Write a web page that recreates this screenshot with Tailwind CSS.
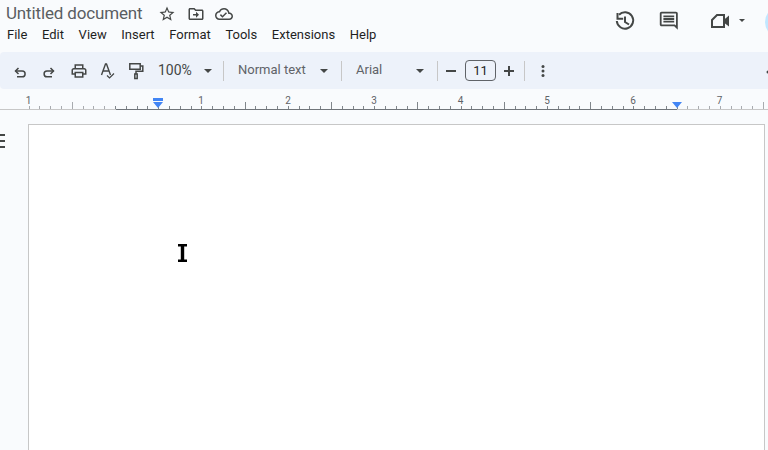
<!DOCTYPE html>
<html lang="en">
<head>
    <title>Untitled document</title>
    <meta name="viewport" content="width=device-width, initial-scale=1.0">
    <script src="https://cdn.jsdelivr.net/npm/@tailwindcss/browser@4"></script>
</head>
<body class="relative h-[450px] w-[768px] overflow-hidden bg-[#f9fbfd] text-[#1f1f1f] font-[Roboto,sans-serif]">
    <!-- Header -->
    <header class="flex h-[52px]">
        <div class="flex-1">
            <div class="flex h-[27px] items-center pl-[6px]">
                <span class="w-[152px] text-[17px] leading-none tracking-[-0.15px] text-[#5a5e62]">Untitled document</span>
                <svg class="h-[18px] w-[18px] fill-[#444746]" viewBox="0 0 24 24"><path d="M22 9.24l-7.19-.62L12 2 9.19 8.63 2 9.24l5.46 4.73L5.82 21 12 17.27 18.18 21l-1.63-7.03L22 9.24zM12 15.4l-3.76 2.27 1-4.28-3.32-2.88 4.38-.38L12 6.1l1.71 4.04 4.38.38-3.32 2.88 1 4.28L12 15.4z"/></svg>
                <svg class="ml-[11px] h-[18px] w-[18px] fill-[#444746]" viewBox="0 0 24 24"><path d="M20 6h-8l-2-2H4c-1.1 0-2 .9-2 2v12c0 1.1.9 2 2 2h16c1.1 0 2-.9 2-2V8c0-1.1-.9-2-2-2zm0 12H4V6h5.17l2 2H20v10zm-8-4H8v-2h4V9l4 4-4 4v-3z"/></svg>
                <svg class="ml-[10px] h-[18px] w-[18px] fill-[#444746]" viewBox="0 0 24 24"><path d="M19.35 10.04C18.67 6.59 15.64 4 12 4 9.11 4 6.6 5.64 5.35 8.04 2.34 8.36 0 10.91 0 14c0 3.31 2.69 6 6 6h13c2.76 0 5-2.24 5-5 0-2.64-2.05-4.78-4.65-4.96zM19 18H6c-2.21 0-4-1.79-4-4 0-2.05 1.53-3.76 3.56-3.97l1.07-.11.5-.95C8.08 7.14 9.94 6 12 6c2.62 0 4.88 1.86 5.39 4.43l.3 1.5 1.53.11c1.56.1 2.78 1.41 2.78 2.96 0 1.65-1.35 3-3 3zm-9-3.82l-2.09-2.09L6.5 13.5 10 17l6.01-6.01-1.41-1.41z"/></svg>
            </div>
            <nav class="flex h-[15px] items-center gap-[14.6px] pl-[7px] text-[13px] leading-none text-[#1f1f1f]">
                <span>File</span>
                <span>Edit</span>
                <span>View</span>
                <span>Insert</span>
                <span>Format</span>
                <span>Tools</span>
                <span>Extensions</span>
                <span>Help</span>
            </nav>
        </div>
        <div class="flex h-[52px] w-[162px] overflow-hidden">
            <svg class="h-[42px] w-[40px] shrink-0 fill-none stroke-[#444746] stroke-[2px]" viewBox="606 0 40 42">
                <path d="M619 14.8A8.2 8.2 0 1 1 616.8 21"/>
                <path d="M617.5 13V18.7H623.2"/>
                <path d="M625 16.5V22L629 24.5"/>
            </svg>
            <svg class="ml-[12px] mt-[10px] h-[21.6px] w-[21.6px] shrink-0 fill-[#444746]" viewBox="0 0 24 24"><path d="M21.99 4c0-1.1-.89-2-1.99-2H4c-1.1 0-2 .9-2 2v12c0 1.1.9 2 2 2h14l4 4-.01-18zM20 4v13.17L18.83 16H4V4h16zM6 12h12v2H6zm0-3h12v2H6zm0-3h12v2H6z"/></svg>
            <svg class="ml-[30px] mt-[10px] h-[22px] w-[22px] shrink-0" viewBox="709 10 22 22">
                <path class="fill-none stroke-[#444746] stroke-[2px]" d="M711 20L716 15H723V27H711Z"/>
                <path class="fill-[#444746]" d="M722 20.5L728 15.5V26.5L722 22Z"/>
            </svg>
            <svg class="ml-[7px] mt-[19px] h-[3px] w-[6px] shrink-0 fill-[#444746]" viewBox="0 0 6 3"><path d="M0 0H6L3 3Z"/></svg>
            <div class="ml-[20px] mt-[6px] h-[32px] w-[32px] shrink-0 rounded-full bg-[#c2e7ff]"></div>
        </div>
    </header>

    <!-- Toolbar -->
    <div class="flex h-[37px] items-center overflow-hidden rounded-l-[4px] bg-[#edf2fa] text-[13px] text-[#444746]">
        <svg class="ml-[11px] h-[18px] w-[18px] shrink-0 fill-none stroke-[#444746] stroke-[1.5px]" viewBox="11 62 18 18">
            <path d="M18.5 68L15.5 71L18.5 74"/>
            <path d="M15.5 71H22.2A2.9 2.9 0 0 1 22.2 76.8H17"/>
        </svg>
        <svg class="ml-[11px] h-[18px] w-[18px] shrink-0 fill-none stroke-[#444746] stroke-[1.5px]" viewBox="40 62 18 18">
            <path d="M50.5 68L53.5 71L50.5 74"/>
            <path d="M53.5 71H47A2.9 2.9 0 0 0 47 76.8H52"/>
        </svg>
        <svg class="ml-[12px] h-[18px] w-[18px] shrink-0 fill-[#444746]" viewBox="0 0 24 24"><path d="M19 8h-1V3H6v5H5c-1.66 0-3 1.34-3 3v6h4v4h12v-4h4v-6c0-1.66-1.34-3-3-3zM8 5h8v3H8V5zm8 14H8v-4h8v4zm2-4v-2H6v2H4v-4c0-.55.45-1 1-1h14c.55 0 1 .45 1 1v4h-2z"/></svg>
        <svg class="ml-[11px] h-[18px] w-[17px] shrink-0 fill-none stroke-[#444746]" viewBox="99 62 17 18">
            <path class="stroke-[1.4px]" d="M101.5 75L105.5 64H106.5L110.5 75M103 71H109"/>
            <path class="stroke-[1.2px]" d="M107 75.5L109.5 78L114 73.5"/>
        </svg>
        <svg class="ml-[11px] h-[18px] w-[18px] shrink-0 fill-none stroke-[#444746] stroke-[1.5px]" viewBox="127 63 18 18">
            <path d="M129.8 64.8H140.2V70.2H129.8Z"/>
            <path d="M140.2 67H142.8V72.2H136V75"/>
            <path d="M134.8 75H137.2V79.4H134.8Z"/>
        </svg>
        <span class="ml-[13px] w-[45px] shrink-0 text-[14px]">100%</span>
        <svg class="ml-px h-[4px] w-[8px] shrink-0 fill-[#444746]" viewBox="0 0 8 4"><path d="M0 0H8L4 4Z"/></svg>
        <div class="ml-[11px] h-[20px] w-px shrink-0 bg-[#c7c7c7]"></div>
        <span class="mb-[2px] ml-[14px] w-[81px] shrink-0 text-[#5f6368]">Normal text</span>
        <svg class="ml-px h-[4px] w-[8px] shrink-0 fill-[#444746]" viewBox="0 0 8 4"><path d="M0 0H8L4 4Z"/></svg>
        <div class="ml-[13px] h-[20px] w-px shrink-0 bg-[#c7c7c7]"></div>
        <span class="mb-[2px] ml-[14px] w-[59px] shrink-0 text-[#5f6368]">Arial</span>
        <svg class="ml-px h-[4px] w-[8px] shrink-0 fill-[#444746]" viewBox="0 0 8 4"><path d="M0 0H8L4 4Z"/></svg>
        <div class="ml-[13px] h-[20px] w-px shrink-0 bg-[#c7c7c7]"></div>
        <div class="ml-[8px] h-[2px] w-[10px] shrink-0 bg-[#444746]"></div>
        <div class="ml-[9px] flex h-[21px] w-[31px] shrink-0 items-center justify-center rounded-[4px] border border-[#5f6368] text-[#1f1f1f]">11</div>
        <svg class="ml-[8px] h-[10px] w-[10px] shrink-0 fill-[#444746]" viewBox="0 0 10 10"><path d="M4 0H6V4H10V6H6V10H4V6H0V4H4Z"/></svg>
        <div class="ml-[10px] h-[20px] w-px shrink-0 bg-[#c7c7c7]"></div>
        <svg class="ml-[16px] h-[12px] w-[4px] shrink-0 fill-[#444746]" viewBox="0 0 4 12"><circle cx="2" cy="1.5" r="1.5"/><circle cx="2" cy="6" r="1.5"/><circle cx="2" cy="10.5" r="1.5"/></svg>
        <svg class="ml-[221px] mt-[3px] h-[4px] w-[4px] shrink-0 fill-[#444746]" viewBox="0 0 4 4"><circle cx="2" cy="2" r="1.5"/></svg>
    </div>

    <!-- Ruler -->
    <svg class="block h-[21px] w-[768px]" viewBox="0 89 768 21">
        <path id="ticksLight" class="fill-none stroke-[#a8abaf]" d=""/>
        <path id="ticksDark" class="fill-none stroke-[#80868b]" d=""/>
        <path class="fill-none stroke-[#c7c7c7]" d="M0 109.5H768"/>
        <path class="fill-none stroke-[#70757a]" d="M116 109.5H677"/>
        <g class="fill-[#5f6368] text-[10px]" text-anchor="middle">
            <text x="28.5" y="104">1</text>
            <text x="201" y="104">1</text>
            <text x="288" y="104">2</text>
            <text x="374" y="104">3</text>
            <text x="460.5" y="104">4</text>
            <text x="547" y="104">5</text>
            <text x="633" y="104">6</text>
            <text x="719.5" y="104">7</text>
        </g>
        <path class="fill-[#4285f4]" d="M153 98H163V101H153ZM153 102H163L158 108ZM672 102H682L677 108Z"/>
    </svg>

    <!-- Page -->
    <main class="ml-[28px] mt-[14px] h-[326px] w-[737px] border border-b-0 border-[#c7c7c7] bg-white"></main>

    <!-- Outline toggle peeking in from the left -->
    <div class="absolute left-0 top-[134px] flex w-[5px] flex-col gap-[4px]">
        <div class="h-[2px] bg-[#444746]"></div>
        <div class="h-[2px] bg-[#444746]"></div>
        <div class="h-[2px] bg-[#444746]"></div>
    </div>

    <!-- Text cursor -->
    <svg class="absolute left-[178px] top-[244px] h-[18px] w-[9px] fill-black" viewBox="0 0 9 18"><path d="M0 0H9V2.5H6.2V15.5H9V18H0V15.5H2.8V2.5H0Z"/></svg>

    <script>
        // Ruler ticks: 8 to the inch, 86.4px per inch, 0 sits at x=115
        let light = '';
        let dark = '';
        for (let k = -8; k <= 60; k++) {
            const x = Math.round(115 + k * 10.8) + 0.5;
            const top = (k % 4 === 0 && k % 8 !== 0) ? 102 : 106;
            const seg = `M${x} ${top}V109`;
            if (k >= 0 && k <= 52) dark += seg; else light += seg;
        }
        document.getElementById('ticksLight').setAttribute('d', light);
        document.getElementById('ticksDark').setAttribute('d', dark);
    </script>
</body>
</html>
